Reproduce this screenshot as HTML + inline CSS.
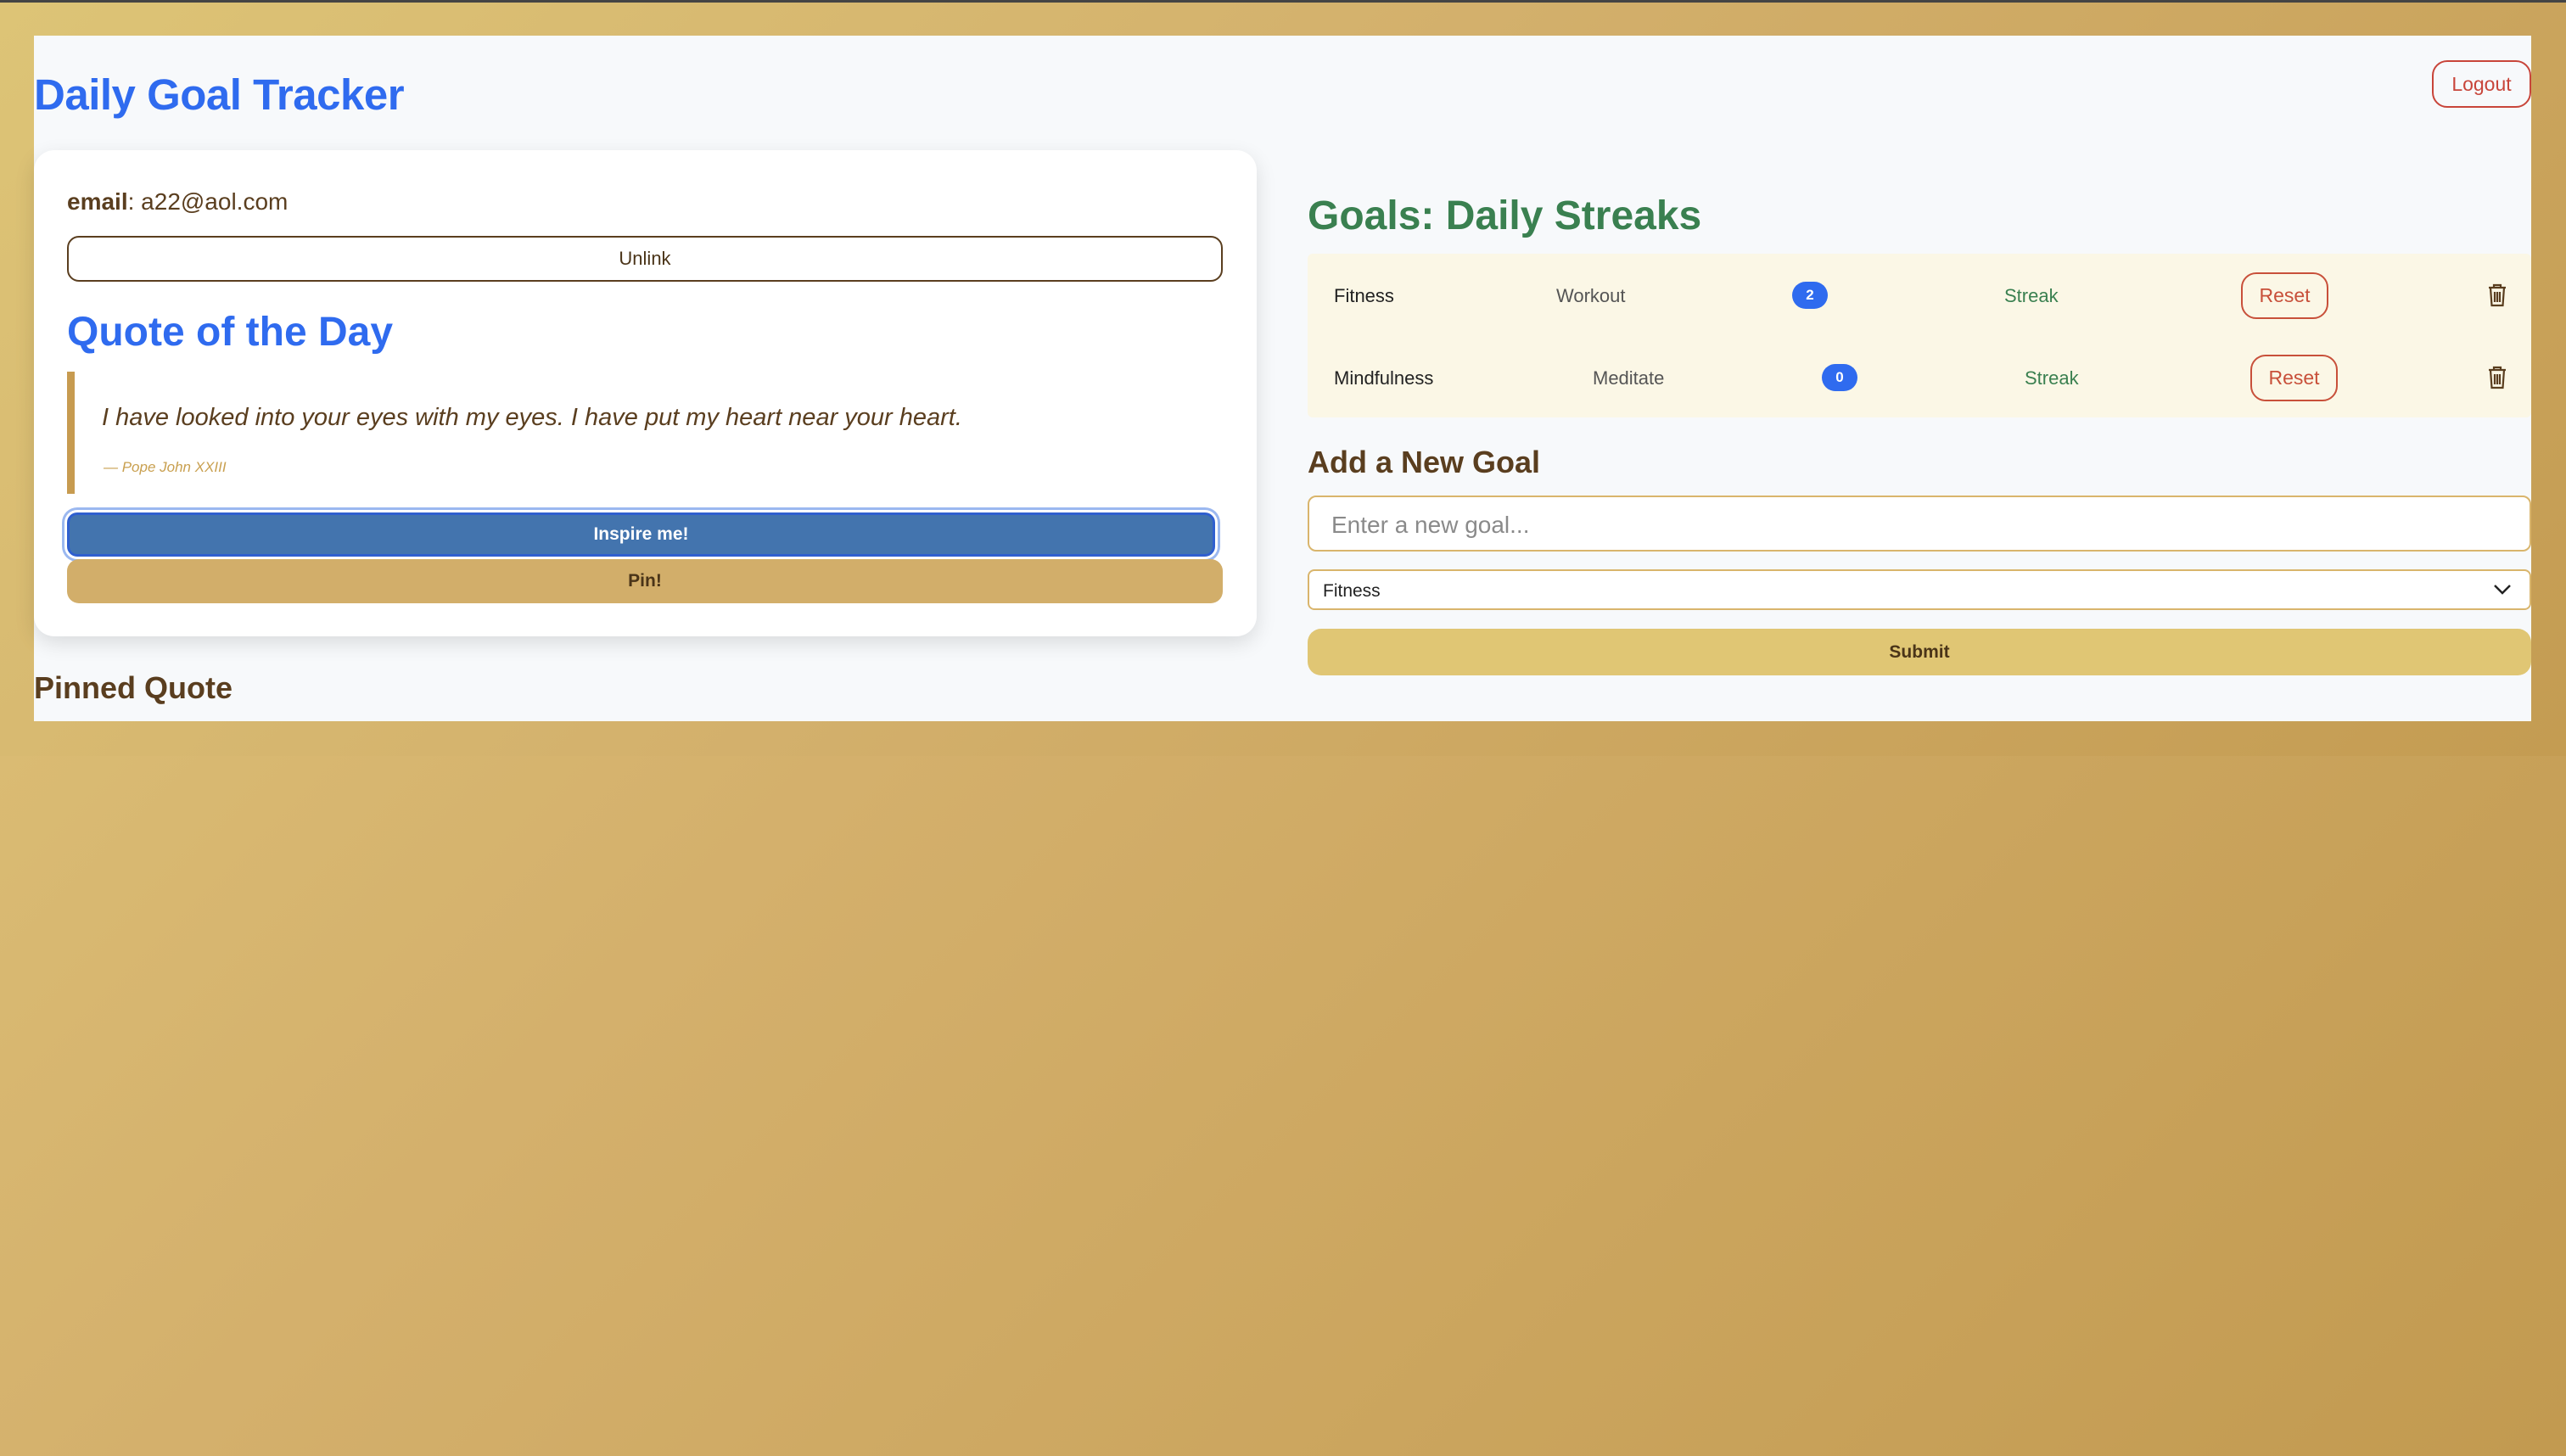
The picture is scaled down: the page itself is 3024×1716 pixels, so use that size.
<!DOCTYPE html>
<html><head><meta charset="utf-8"><style>
*{box-sizing:border-box;margin:0;padding:0}
html,body{width:3024px;height:1716px;overflow:hidden}
body{background:linear-gradient(135deg,#dfc579 0%,#d4b06c 40%,#c29a50 100%);font-family:"Liberation Sans",sans-serif;position:relative;color:#5a3e1f}
.topband{position:absolute;left:0;top:0;width:3024px;height:891px;background:linear-gradient(135deg,#ddc476 0%,#d3b06c 45%,#c49c52 100%);border-top:3px solid #444}
.panel{position:absolute;left:40px;top:42px;width:2943px;height:808px;background:#f7f9fb}
.a{position:absolute;white-space:nowrap}
h1{font-size:51px;color:#2f6bef;font-weight:bold;letter-spacing:-0.5px}
.card{position:absolute;left:40px;top:177px;width:1441px;height:573px;background:#fff;border-radius:24px;box-shadow:0 8px 24px rgba(0,0,0,0.12)}
.btn{position:absolute;display:flex;align-items:center;justify-content:center;font-size:22px}
.row{position:absolute;font-size:22px;transform:translateY(-50%)}
.reset{position:absolute;border:2px solid #c8503a;color:#c8503a;border-radius:18px;font-size:23px;display:flex;align-items:center;justify-content:center;font-weight:500}
.badge{position:absolute;background:#2f6bef;color:#fff;font-weight:bold;font-size:17px;width:42px;height:32px;border-radius:16px;display:flex;align-items:center;justify-content:center}
</style></head><body>
<div class="topband"></div>
<div class="panel"></div>
<h1 class="a" style="left:40px;top:82px">Daily Goal Tracker</h1>
<div class="btn" style="left:2866px;top:71px;width:117px;height:56px;border:2px solid #c8453a;color:#c8453a;border-radius:18px;font-size:23px">Logout</div>

<div class="card"></div>
<div class="a" style="left:79px;top:222px;font-size:28px;color:#5a3e1f"><b>email</b>: a22@aol.com</div>
<div class="btn" style="left:79px;top:278px;width:1362px;height:54px;border:2px solid #5a3e1f;border-radius:14px;background:#fff;color:#4a3418">Unlink</div>
<div class="a" style="left:79px;top:364px;font-size:48px;font-weight:bold;color:#2f6bef">Quote of the Day</div>
<div class="a" style="left:79px;top:438px;width:9px;height:144px;background:#c79b50"></div>
<div class="a" style="left:120px;top:476px;font-size:29px;font-style:italic;color:#5a3e1f">I have looked into your eyes with my eyes. I have put my heart near your heart.</div>
<div class="a" style="left:122px;top:541px;font-size:17px;font-style:italic;color:#c9a050">— Pope John XXIII</div>
<div class="btn" style="left:79px;top:604px;width:1353px;height:52px;background:#4374ae;border:3px solid #2f5fcf;box-shadow:0 0 0 3px #fff,0 0 0 6px #9bb8f0;border-radius:12px;color:#fff;font-weight:bold;font-size:21px">Inspire me!</div>
<div class="btn" style="left:79px;top:659px;width:1362px;height:52px;background:#d2ae6a;border-radius:14px;color:#4a3418;font-weight:bold;font-size:21px">Pin!</div>
<div class="a" style="left:40px;top:790px;font-size:36px;font-weight:bold;color:#5a3e1f">Pinned Quote</div>

<div class="a" style="left:1541px;top:227px;font-size:48px;font-weight:bold;color:#3a8050">Goals: Daily Streaks</div>
<div class="a" style="left:1541px;top:299px;width:1442px;height:193px;background:#fbf7e6;border-radius:6px"></div>
<div class="row" style="left:1572px;top:349px;color:#222">Fitness</div>
<div class="row" style="left:1834px;top:349px;color:#555">Workout</div>
<div class="badge" style="left:2112px;top:332px">2</div>
<div class="row" style="left:2362px;top:349px;color:#3a8050">Streak</div>
<div class="reset" style="left:2641px;top:321px;width:103px;height:55px">Reset</div>
<div class="row" style="left:1572px;top:446px;color:#222">Mindfulness</div>
<div class="row" style="left:1877px;top:446px;color:#555">Meditate</div>
<div class="badge" style="left:2147px;top:429px">0</div>
<div class="row" style="left:2386px;top:446px;color:#3a8050">Streak</div>
<div class="reset" style="left:2652px;top:418px;width:103px;height:55px">Reset</div>
<svg class="a" style="left:2931px;top:334px" width="24" height="28" viewBox="0 0 24 28" fill="none" stroke="#5a3e1f" stroke-width="2.2"><path d="M2 5h20M8 5V2h8v3M4 5l1.5 21h13L20 5M9 10v12M12 10v12M15 10v12"/></svg>
<svg class="a" style="left:2931px;top:431px" width="24" height="28" viewBox="0 0 24 28" fill="none" stroke="#5a3e1f" stroke-width="2.2"><path d="M2 5h20M8 5V2h8v3M4 5l1.5 21h13L20 5M9 10v12M12 10v12M15 10v12"/></svg>

<div class="a" style="left:1541px;top:524px;font-size:36px;font-weight:bold;color:#5a3e1f">Add a New Goal</div>
<div class="a" style="left:1541px;top:584px;width:1442px;height:66px;border:2px solid #d9b56c;border-radius:10px;background:#fff;font-size:28px;color:#8a8a8a;padding:17px 0 0 26px">Enter a new goal...</div>
<div class="a" style="left:1541px;top:671px;width:1442px;height:48px;border:2px solid #d9b56c;border-radius:8px;background:#fff;font-size:21px;color:#222;padding:12px 0 0 16px">Fitness</div>
<svg class="a" style="left:2938px;top:687px" width="22" height="16" viewBox="0 0 22 16" fill="none" stroke="#222" stroke-width="2.5"><path d="M2 3l9 9 9-9"/></svg>
<div class="btn" style="left:1541px;top:741px;width:1442px;height:55px;background:#e0c674;border-radius:16px;color:#4a3418;font-weight:bold;font-size:21px">Submit</div>
</body></html>
